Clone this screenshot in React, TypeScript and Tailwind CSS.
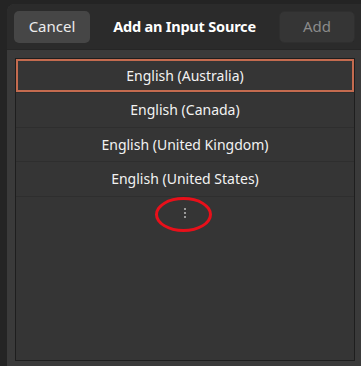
import React from "react";

const rows = [
  "English (Australia)",
  "English (Canada)",
  "English (United Kingdom)",
  "English (United States)",
];

export default function App() {
  return (
    <div
      className="w-[361px] h-[366px] bg-[#242424] pl-[7px] pt-[4px] overflow-hidden"
      style={{ fontFamily: "'Noto Sans', 'Open Sans', sans-serif" }}
    >
      <div className="w-[354px] h-[362px] flex flex-col rounded-tl-[8px] overflow-hidden bg-[#3a3a3a]">
        <div className="h-[46px] shrink-0 bg-[#2b2b2b] flex items-center pl-[7px] pr-[6px] border-b border-[#262626]">
          <button className="w-[76px] h-[32px] rounded-[5px] bg-[#464646] text-[#ececec] text-[15px]">
            Cancel
          </button>
          <div className="flex-1 text-center text-white font-bold text-[14.5px] tracking-[-0.2px]">
            Add an Input Source
          </div>
          <button className="w-[76px] h-[32px] rounded-[5px] bg-[#353535] border border-[#2f2f2f] text-[#8b8b8b] text-[15px]">
            Add
          </button>
        </div>
        <div className="flex-1 pl-[8px] pr-[6px] pt-[8px] pb-[5px]">
          <div className="h-full border border-[#1e1e1e] bg-[#353535] flex flex-col">
            {rows.map((r, i) => (
              <div
                key={r}
                className={
                  i === 0
                    ? "h-[33px] flex items-center justify-center border-2 border-[#c46b4f] text-[#f2f2f2] text-[14px]"
                    : "h-[34.5px] flex items-center justify-center border-t border-[#2e2e2e] text-[#f2f2f2] text-[14px]"
                }
              >
                {r}
              </div>
            ))}
            <div className="h-[34px] flex items-center justify-center border-t border-[#2e2e2e] relative">
              <div className="flex flex-col gap-[2px]">
                <span className="w-[2px] h-[2px] bg-[#9a9a9a]" />
                <span className="w-[2px] h-[2px] bg-[#9a9a9a]" />
                <span className="w-[2px] h-[2px] bg-[#9a9a9a]" />
              </div>
              <div className="absolute left-[139px] top-[0px] w-[57px] h-[35px] rounded-[50%] border-[3px] border-[#e8101a]" />
            </div>
          </div>
        </div>
      </div>
    </div>
  );
}
